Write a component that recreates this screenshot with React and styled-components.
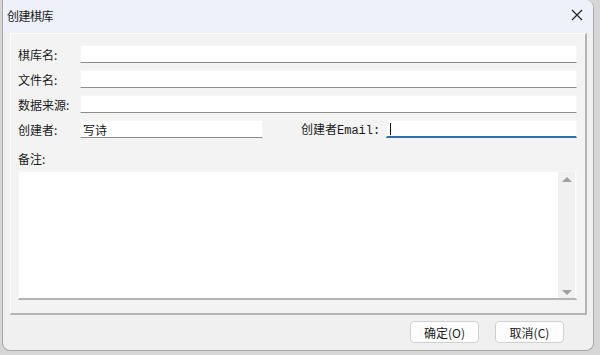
import React from "react";
import styled, { createGlobalStyle } from "styled-components";

const GlobalStyle = createGlobalStyle`
  html, body {
    margin: 0;
    padding: 0;
    background: #d6d6d6;
    font-family: "Noto Sans CJK SC", "Noto Sans", sans-serif;
  }
`;

const Window = styled.div`
  margin-left: 2px;
  width: 592px;
  height: 351px;
  border: 1px solid #a9a9a9;
  border-top: none;
  border-radius: 0 8px 8px 8px;
  background: #f0f0f0;
  display: flex;
  flex-direction: column;
  overflow: hidden;
  box-sizing: border-box;
`;

const TitleBar = styled.div`
  height: 32px;
  background: #eef1f9;
  display: flex;
  align-items: center;
  justify-content: space-between;
  padding: 0 6px 2px 4px;
  box-sizing: border-box;
  flex-shrink: 0;
`;

const Title = styled.span`
  font-size: 12px;
  color: #1a1a1a;
  letter-spacing: -0.5px;
`;

const CloseButton = styled.div`
  width: 20px;
  height: 20px;
  display: flex;
  align-items: center;
  justify-content: center;
`;

const Body = styled.div`
  flex: 1;
  display: flex;
  flex-direction: column;
  padding: 1px 6px 0 7px;
`;

const Panel = styled.div`
  height: 282px;
  box-sizing: border-box;
  background: #f3f3f3;
  border-top: 1px solid #fbfbfb;
  border-left: 1px solid #fbfbfb;
  border-right: 2px solid #b4b4b4;
  border-bottom: 2px solid #b4b4b4;
  padding: 11px 8px 0 7px;
  display: flex;
  flex-direction: column;
`;

const Row = styled.div`
  display: flex;
  align-items: center;
  height: 18px;
  margin-bottom: 7px;
`;

const Label = styled.span`
  width: ${(p) => p.$w || 62}px;
  margin-left: ${(p) => p.$ml || 0}px;
  flex-shrink: 0;
  font-size: 12px;
  color: #1a1a1a;
  font-family: ${(p) =>
    p.$mono
      ? '"Liberation Mono", "Noto Sans CJK SC", monospace'
      : '"Noto Sans CJK SC", sans-serif'};
  white-space: nowrap;
`;

const Input = styled.div`
  height: 18px;
  box-sizing: border-box;
  background: #fff;
  border: 1px solid #f6f6f6;
  border-bottom: ${(p) => (p.$focus ? "2px solid #2a6fb0" : "1px solid #8c8c8c")};
  width: ${(p) => (p.$w ? `${p.$w}px` : "auto")};
  flex: ${(p) => (p.$w ? "none" : 1)};
  display: flex;
  align-items: center;
  padding-left: 2px;
  font-size: 12px;
  color: #111;
`;

const Caret = styled.span`
  width: 1px;
  height: 12px;
  background: #111;
  margin-left: 1px;
`;

const NoteLabel = styled(Label)`
  margin-top: 5px;
  height: 18px;
  line-height: 18px;
`;

const TextArea = styled.div`
  margin-top: 3px;
  height: 129px;
  box-sizing: border-box;
  background: #fff;
  border: 1px solid #f6f6f6;
  border-bottom: 2px solid #b4b4b4;
  display: flex;
  justify-content: flex-end;
`;

const ScrollBar = styled.div`
  width: 17px;
  background: #f0f0f0;
  display: flex;
  flex-direction: column;
  justify-content: space-between;
  align-items: center;
  padding: 5px 0 3px;
  box-sizing: border-box;
  margin-right: 1px;
`;

const Arrow = styled.div`
  width: 0;
  height: 0;
  border-left: 5px solid transparent;
  border-right: 5px solid transparent;
  ${(p) =>
    p.$down
      ? "border-top: 5px solid #a0a0a0;"
      : "border-bottom: 5px solid #a0a0a0;"}
`;

const Footer = styled.div`
  display: flex;
  justify-content: flex-end;
  gap: 16px;
  padding: 6px 23px 0 0;
`;

const Button = styled.div`
  width: 69px;
  height: 22px;
  box-sizing: border-box;
  border: 1px solid #d0d0d0;
  border-radius: 4px;
  background: #fdfdfd;
  display: flex;
  align-items: center;
  justify-content: center;
  font-size: 12px;
  color: #1a1a1a;
`;

export default function App() {
  return (
    <>
      <GlobalStyle />
      <Window>
        <TitleBar>
          <Title>创建棋库</Title>
          <CloseButton>
            <svg width="12" height="12" viewBox="0 0 12 12">
              <path d="M1 1 L11 11 M11 1 L1 11" stroke="#222" strokeWidth="1.2" />
            </svg>
          </CloseButton>
        </TitleBar>
        <Body>
          <Panel>
            <Row>
              <Label>棋库名:</Label>
              <Input />
            </Row>
            <Row>
              <Label>文件名:</Label>
              <Input />
            </Row>
            <Row>
              <Label>数据来源:</Label>
              <Input />
            </Row>
            <Row>
              <Label>创建者:</Label>
              <Input $w={183}>写诗</Input>
              <Label $ml={38} $w={85} $mono>
                创建者Email:
              </Label>
              <Input $focus>
                <Caret />
              </Input>
            </Row>
            <NoteLabel>备注:</NoteLabel>
            <TextArea>
              <ScrollBar>
                <Arrow />
                <Arrow $down />
              </ScrollBar>
            </TextArea>
          </Panel>
          <Footer>
            <Button>确定(O)</Button>
            <Button>取消(C)</Button>
          </Footer>
        </Body>
      </Window>
    </>
  );
}
